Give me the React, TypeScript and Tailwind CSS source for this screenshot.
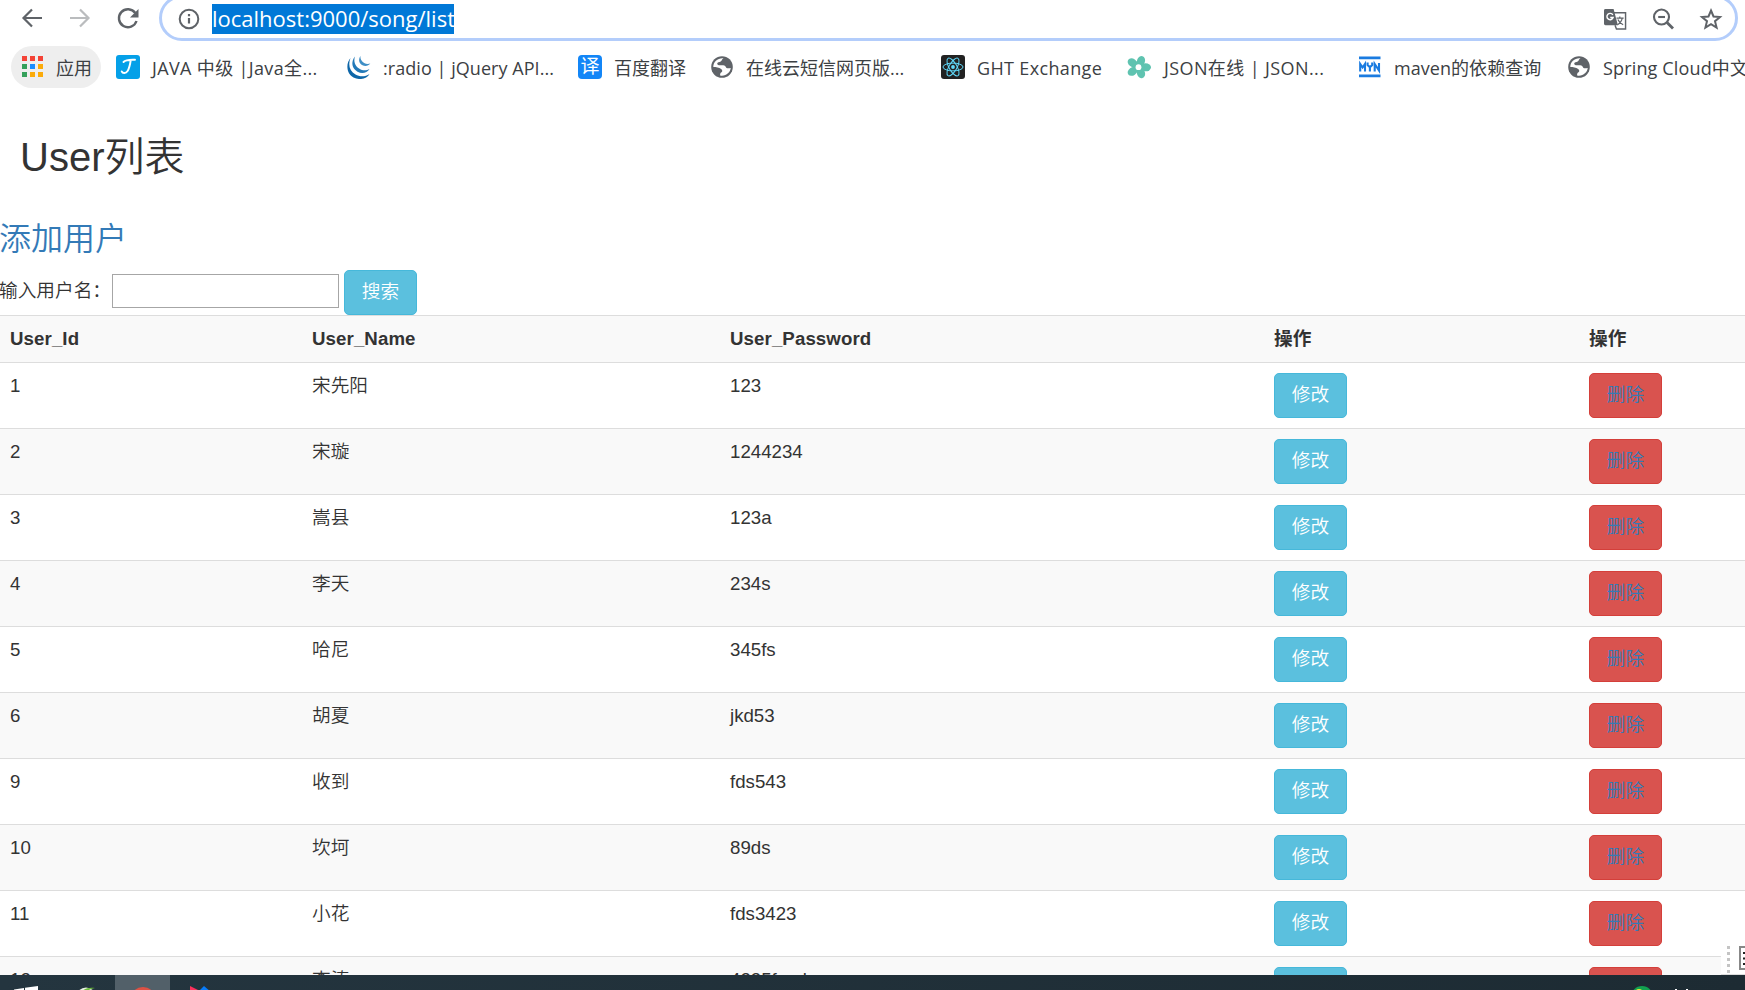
import React from "react";

interface User {
    id: number;
    name: string;
    password: string;
}

const users: User[] = [
    { id: 1, name: "宋先阳", password: "123" },
    { id: 2, name: "宋璇", password: "1244234" },
    { id: 3, name: "嵩县", password: "123a" },
    { id: 4, name: "李天", password: "234s" },
    { id: 5, name: "哈尼", password: "345fs" },
    { id: 6, name: "胡夏", password: "jkd53" },
    { id: 9, name: "收到", password: "fds543" },
    { id: 10, name: "坎坷", password: "89ds" },
    { id: 11, name: "小花", password: "fds3423" },
    { id: 12, name: "李涛", password: "4235fsad" },
];

const JavaIcon = () => (
    <svg viewBox="0 0 24 24" className="size-6">
        <rect width="24" height="24" rx="3" fill="#05a0e8" />
        <path
            d="M7.500 7c2-2.200 7-2.400 11.500-2.200M14.800 5c-.8 5-1.600 8.500-3.200 11-1.700 2.600-5 2.700-5.900.4"
            fill="none"
            stroke="#fff"
            strokeWidth="1.900"
            strokeLinecap="round"
        />
    </svg>
);

const JQueryIcon = () => (
    <svg viewBox="0 0 24 24" className="size-6">
        <path d="M3.500 3C-1.500 9-.5 18.500 6.500 22.500c6 3 13.500 1.500 16-3.500-4 3-10 3-14 .5C2.500 16 .8 9.500 3.500 3z" fill="#0d66a8" />
        <path d="M8 1.500c-4.500 5.500-3 12 2.500 15.200 4.500 2.400 9.500 1.300 12-2.700-3 1.800-7 1.800-10-.2C8 11 6.300 6.500 8 1.500z" fill="#2279b8" />
        <path d="M13.500 1c-2.500 3.500-1.500 7.500 2 9.300 3 1.400 6 .6 7.800-1.800-2 .8-4.300.6-6.200-.6C14.300 6.200 13 3.800 13.500 1z" fill="#3f8fc6" />
    </svg>
);

const FanyiIcon = () => (
    <span className="flex size-6 items-center justify-center rounded-[4px] bg-[#1386f7] pb-[1px] text-[19px] leading-none text-white">
        译
    </span>
);

const GlobeIcon = () => (
    <svg viewBox="0 0 24 24" className="size-6">
        <circle cx="12" cy="12" r="10.800" fill="#5f6368" />
        <path
            d="M13.500 3.400c-2 .6-1.300 2.200-2.800 3-1.600.8-3.300.4-3.500 2.200-.1 1.400 1.400 1.700 3 1.700 2.300 0 4.800-.3 5.500 1.400.5 1.400 1.500 1.800 3.800 1.500.8-.1 1.200-.2 1.200-.2-.4 4-4 7.600-8.700 7.700-1.300 0-2-.2-2-.2.200-1.600.2-2.500 1.500-3.200 1.300-.8.9-2.400-.4-3.300-2-1.300-5-1.900-7.800-1.900 0-5.600 4.800-9.300 10.200-8.700z"
            fill="#fff"
        />
    </svg>
);

const ReactIcon = () => (
    <svg viewBox="0 0 24 24" className="size-6" fill="none" stroke="#61dafb" strokeWidth="1">
        <rect width="24" height="24" rx="3" fill="#222" stroke="none" />
        <ellipse cx="12" cy="12" rx="10" ry="3.900" />
        <ellipse cx="12" cy="12" rx="10" ry="3.900" transform="rotate(60 12 12)" />
        <ellipse cx="12" cy="12" rx="10" ry="3.900" transform="rotate(120 12 12)" />
        <circle cx="12" cy="12" r="1.900" fill="#61dafb" stroke="none" />
    </svg>
);

const FlowerIcon = () => (
    <svg viewBox="0 0 24 24" className="size-6" fill="#5fc3b0">
        <ellipse cx="18.500" cy="12.300" rx="5.500" ry="4" />
        <ellipse cx="14" cy="6" rx="4" ry="5" transform="rotate(18 14 6)" />
        <ellipse cx="5.500" cy="7.800" rx="5.200" ry="4" transform="rotate(36 5.500 7.800)" />
        <ellipse cx="5.500" cy="16.400" rx="5.200" ry="4" transform="rotate(-36 5.500 16.400)" />
        <ellipse cx="14" cy="18.300" rx="4" ry="5" transform="rotate(-18 14 18.300)" />
        <circle cx="11.500" cy="12" r="6" />
        <circle cx="11.500" cy="12.200" r="2.900" fill="#fff" />
    </svg>
);

const MvnIcon = () => (
    <svg viewBox="0 0 24 24" className="size-6" fill="none" stroke="#1a7be0" strokeWidth="2.100">
        <path d="M1 2.800h21.500M1 20.800h21.500" strokeWidth="2.800" />
        <path d="M2.200 16.500V9l2.400 3.500L7 9v7.500M9.600 7.500V10l2.300 2.300 2.300-2.300V7.500M11.900 12v4.500M16.700 16.500V9l4.300 6.500V8" />
    </svg>
);

const bookmarks = [
    { label: "JAVA 中级 |Java全...", icon: <JavaIcon />, box: "w-[231px]", text: "tracking-[0.36px]" },
    { label: ":radio | jQuery API...", icon: <JQueryIcon />, box: "w-[231px]", text: "tracking-[0.05px]" },
    { label: "百度翻译", icon: <FanyiIcon />, box: "w-[132px]", text: "" },
    { label: "在线云短信网页版...", icon: <GlobeIcon />, box: "w-[231px]", text: "" },
    { label: "GHT Exchange", icon: <ReactIcon />, box: "w-[186px]", text: "tracking-[0.35px]" },
    { label: "JSON在线 | JSON...", icon: <FlowerIcon />, box: "w-[231px]", text: "tracking-[0.4px] pl-[1px]" },
    { label: "maven的依赖查询", icon: <MvnIcon />, box: "w-[209px]", text: "tracking-[0.05px]" },
    { label: "Spring Cloud中文", icon: <GlobeIcon />, box: "w-[220px]", text: "tracking-[0.15px]" },
];

const BrowserBar = () => (
    <div className="h-[41px] shrink-0 flex items-start overflow-hidden text-[#5f6368]">
        <div className="flex w-[159px] shrink-0 pt-[6px] pl-5">
            <svg viewBox="0 0 24 24" className="size-6" fill="none" stroke="#5f6368" strokeWidth="2.200">
                <path d="M22 12H4M12 3.500 3.500 12l8.500 8.500" />
            </svg>
            <svg viewBox="0 0 24 24" className="ml-6 size-6" fill="none" stroke="#babcbe" strokeWidth="2.200">
                <path d="M2 12h18M12 3.500l8.500 8.500-8.500 8.500" />
            </svg>
            <svg viewBox="0 0 24 24" className="ml-6 size-6" fill="none" stroke="#5f6368" strokeWidth="2.400">
                <path d="M19.300 7A9 9 0 1 0 20.500 15" />
                <path d="M22.500 3v8.500H14z" fill="#5f6368" stroke="none" />
            </svg>
        </div>
        <div className="-mt-[5px] flex h-[46px] w-[1579px] items-center rounded-full border-[3px] border-[#b3cdfb] pt-[2px] pl-4">
            <svg viewBox="0 0 22 22" className="size-[22px]" fill="none" stroke="#5f6368" strokeWidth="2">
                <circle cx="11" cy="11" r="9.300" />
                <path d="M11 10v5.500M11 6v2.200" strokeWidth="2.200" />
            </svg>
            <span className="ml-[12px] h-[30px] w-[242px] shrink-0 bg-[#0078d7] text-[22px] leading-[29px] whitespace-nowrap text-white">
                localhost:9000/song/list
            </span>
            <div className="ml-auto flex items-center gap-[24px] pr-[12px]">
                <svg viewBox="0 0 24 24" className="size-[23px]" fill="none" stroke="#5f6368">
                    <path d="M10 5h12.500v17H13l-1.500-4" strokeWidth="1.500" />
                    <path d="M1.500 1h8.500l4.500 17h-13A1.500 1.500 0 0 1 0 16.500v-14A1.500 1.500 0 0 1 1.500 1z" fill="#5f6368" stroke="none" />
                    <path d="M9.200 7.200A3.300 3.300 0 1 0 9.500 10H6.500" stroke="#fff" strokeWidth="1.500" />
                    <path d="M13 10.500h7.500M16.500 8.800v1.700M19 10.500c-.5 3-2.500 5.500-5 7M14.500 12c1 2.500 3 4.500 5.500 5.500" strokeWidth="1.300" />
                </svg>
                <svg viewBox="0 0 24 24" className="size-[24px]" fill="none" stroke="#5f6368" strokeWidth="2.100">
                    <circle cx="10.500" cy="10" r="7.500" />
                    <path d="M16 15.500l6 6" strokeWidth="2.800" />
                    <path d="M7.200 10H14" />
                </svg>
                <svg viewBox="0 0 24 24" className="size-[24px]" fill="none" stroke="#5f6368" strokeWidth="2">
                    <path d="M12 3.500l2.500 6 6.500.5-5 4.200 1.600 6.400L12 17.200l-5.600 3.400L8 14.200 3 10l6.500-.5z" />
                </svg>
            </div>
        </div>
    </div>
);

const appColors = [
    "bg-[#f44336]", "bg-[#f44336]", "bg-[#f44336]",
    "bg-[#34a05a]", "bg-[#1a8cff]", "bg-[#fbab0a]",
    "bg-[#34a05a]", "bg-[#fbab0a]", "bg-[#fbab0a]",
];

const BookmarkBar = () => (
    <div className="flex h-[59px] shrink-0 items-start overflow-hidden pt-[5px] pl-[11px] text-[18px] whitespace-nowrap text-[#3c4043]">
        <div className="flex h-[42px] w-[90px] shrink-0 items-center rounded-full bg-[#eee] pl-[11px]">
            <div className="mb-[2px] grid grid-cols-3 gap-[3px]">
                {appColors.map((color, i) => (
                    <span key={i} className={`size-[5px] ${color}`} />
                ))}
            </div>
            <span className="ml-[13px] pt-[3px]">应用</span>
        </div>
        <div className="flex h-[42px] pl-[15px]">
            {bookmarks.map((b) => (
                <div key={b.label} className={`flex shrink-0 items-center ${b.box}`}>
                    <span className="mb-[1px] shrink-0">{b.icon}</span>
                    <span className={`ml-3 pt-[2px] ${b.text}`}>{b.label}</span>
                </div>
            ))}
        </div>
    </div>
);

const UserTable = () => (
    <table className="w-[1745px] table-fixed border-collapse text-left text-[18.670px] leading-[26px]">
        <colgroup>
            <col className="w-[302px]" />
            <col className="w-[418px]" />
            <col className="w-[544px]" />
            <col className="w-[315px]" />
            <col />
        </colgroup>
        <tbody>
            <tr className="h-[47px] border-t border-[#ddd] bg-[#f9f9f9]">
                {["User_Id", "User_Name", "User_Password", "操作", "操作"].map((title, i) => (
                    <th key={i} className="px-[10px] py-0 font-bold tracking-[0.1px]">
                        {title}
                    </th>
                ))}
            </tr>
            {users.map((user) => (
                <tr key={user.id} className="h-[66px] border-t border-[#ddd] align-top odd:bg-[#f9f9f9]">
                    <td className="px-[10px] pt-[10px]">{user.id}</td>
                    <td className="px-[10px] pt-[10px]">{user.name}</td>
                    <td className="px-[10px] pt-[10px]">{user.password}</td>
                    <td className="px-[10px] pt-[10px]">
                        <button className="block h-[45px] w-[73px] rounded-[5px] border border-[#46b8da] bg-[#5bc0de] pb-[2px] text-white">
                            修改
                        </button>
                    </td>
                    <td className="px-[10px] pt-[10px]">
                        <button className="block h-[45px] w-[73px] rounded-[5px] border border-[#d43f3a] bg-[#d9534f] pb-[2px] text-[#337ab7]">
                            删除
                        </button>
                    </td>
                </tr>
            ))}
        </tbody>
    </table>
);

const Taskbar = () => (
    <div className="flex h-[15px] shrink-0 overflow-hidden bg-linear-to-r from-[#24353f] to-[#1d2b33]">
        <div className="w-[70px] shrink-0 pt-[11px] pl-[14px]">
            <svg viewBox="0 0 24 24" className="size-6" fill="#fff">
                <path d="M0 3.500l10-1.500v10H0zM11 1.800L24 0v12H11zM0 13h10v9.500L0 21zM11 13h13v11l-13-1.600z" />
            </svg>
        </div>
        <div className="w-[45px] shrink-0 pt-[12px] pl-[3px]">
            <svg viewBox="0 0 26 26" className="size-[26px]">
                <ellipse cx="13" cy="13" rx="11" ry="12.500" fill="#e8f0e4" />
                <path d="M8 5C12 1 17 0 22 1c-5 1-8 3-12 5z" fill="#6cbb3c" />
            </svg>
        </div>
        <div className="flex w-[55px] shrink-0 justify-center bg-[#526069] pt-[12px]">
            <svg viewBox="0 0 26 26" className="size-[26px]">
                <circle cx="13" cy="13" r="13" fill="#dd5144" />
            </svg>
        </div>
        <div className="pt-[11px] pl-[19px]">
            <svg viewBox="0 0 24 24" className="size-6">
                <path d="M1 0l12 6-12 14z" fill="#fe315d" />
                <path d="M9 6l6-6 7 6v16H9z" fill="#087cfa" />
            </svg>
        </div>
        <div className="ml-auto w-[115px] shrink-0 pt-[11px]">
            <svg viewBox="0 0 60 20" className="h-5 w-[60px]">
                <circle cx="12" cy="11" r="11" fill="#12a150" />
                <circle cx="9" cy="8" r="5" fill="#f4e53a" />
                <path d="M46 3v6M57 3v2" stroke="#fff" strokeWidth="2" />
            </svg>
        </div>
    </div>
);

const App: React.FC = () => {
    return (
        <div className="relative flex h-[990px] w-[1745px] flex-col overflow-hidden bg-white font-['Open_Sans','Noto_Sans_CJK_SC',sans-serif]">
            <BrowserBar />
            <BookmarkBar />
            <main className="h-[875px] shrink-0 overflow-hidden font-['Liberation_Sans','Noto_Sans_CJK_SC',sans-serif] font-[350] text-[#333]">
                <h1 className="pt-[35px] pl-5 text-[40px] leading-[44px]">User列表</h1>
                <a className="mt-[42px] -ml-[1px] block text-[32px] leading-[36px] text-[#337ab7]">添加用户</a>
                <form className="mt-[13px] flex h-[45px] text-[18.670px]">
                    <label className="-ml-[1px] w-[113px] shrink-0 pt-[8px] leading-[26px] whitespace-nowrap">输入用户名：</label>
                    <input className="mt-1 h-[34px] w-[227px] border border-[#a6a6a6] bg-white" />
                    <button
                        type="button"
                        className="ml-[5px] h-[45px] w-[73px] rounded-[5px] border border-[#46b8da] bg-[#5bc0de] pb-[2px] text-white"
                    >
                        搜索
                    </button>
                </form>
                <UserTable />
            </main>
            <Taskbar />
            <div className="absolute right-0 bottom-[15px] flex h-[33px] w-6 overflow-hidden border-b border-[#ddd] bg-white pt-1 pl-[6px]">
                <div className="flex flex-col gap-[3px]">
                    {[0, 1, 2, 3, 4].map((dot) => (
                        <span key={dot} className="size-[3px] bg-[#c4c4c4]" />
                    ))}
                </div>
                <svg viewBox="0 0 24 24" className="ml-[9px] size-6 shrink-0" fill="none" stroke="#222" strokeWidth="2">
                    <rect x="1" y="1" width="22" height="22" stroke="#888" />
                    <path d="M4 7h4M4 12.500h4M4 18h4M7 5v3" />
                </svg>
            </div>
        </div>
    );
};

export default App;
